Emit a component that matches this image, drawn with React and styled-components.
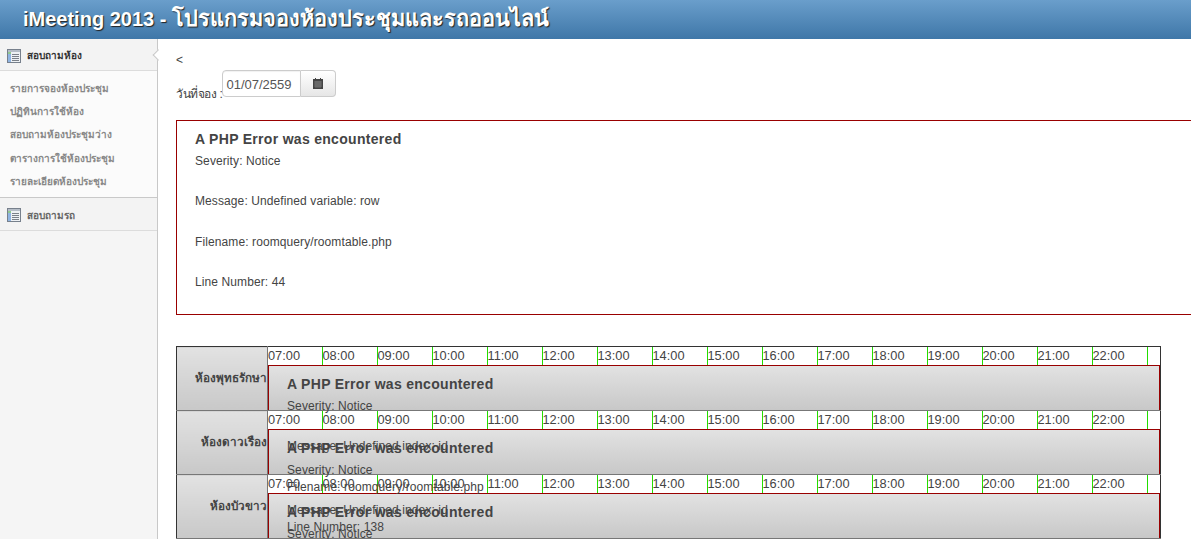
import React from 'react';
import styled, { createGlobalStyle } from 'styled-components';

const HOURS = ['07:00','08:00','09:00','10:00','11:00','12:00','13:00','14:00','15:00','16:00','17:00','18:00','19:00','20:00','21:00','22:00'];
const ROOMS = ['ห้องพุทธรักษา', 'ห้องดาวเรือง', 'ห้องบัวขาว'];
const MENU = ['รายการจองห้องประชุม', 'ปฏิทินการใช้ห้อง', 'สอบถามห้องประชุมว่าง', 'ตารางการใช้ห้องประชุม', 'รายละเอียดห้องประชุม'];

const GlobalStyle = createGlobalStyle`
  html, body {
    margin: 0;
    padding: 0;
    height: 539px;
    overflow: hidden;
    background: #fff;
    font-family: "Liberation Sans", Arial, Tahoma, "Noto Sans", sans-serif;
    font-size: 12px;
    color: #444;
  }
`;

const Header = styled.header`
  height: 39px;
  background: linear-gradient(to bottom, #6a9ecb, #3f77a8);
  color: #fff;
  font-size: 20px;
  font-weight: bold;
  line-height: 37px;
  padding-left: 23px;
  text-shadow: 1px 1px 1px #222;
  white-space: nowrap;
`;

const HeaderThai = styled.span`
  font-size: 21.7px;
`;

const Layout = styled.div`
  display: flex;
  width: 1191px;
  height: 500px;
`;

const Sidebar = styled.aside`
  position: relative;
  flex: 0 0 157px;
  background: #f5f5f5;
  border-right: 1px solid #c8c8c8;
`;

const SideHead = styled.div`
  display: flex;
  align-items: center;
  gap: 6px;
  box-sizing: border-box;
  height: ${p => p.$h}px;
  padding: 2px 0 0 7px;
  background: #f3f3f3;
  border-top: ${p => (p.$top ? '1px solid #c9c9c9' : '0')};
  border-bottom: 1px solid #dcdcdc;
  font-size: 10px;
  font-weight: bold;
  color: ${p => (p.$active ? '#333' : '#666')};
`;

const SideMenu = styled.ul`
  list-style: none;
  margin: 0;
  padding: 6px 0 4px 10px;
  height: 116px;
  background: #fbfbfb;
`;

const SideItem = styled.li`
  height: 23.2px;
  line-height: 23px;
  font-size: 10px;
  font-weight: bold;
  color: #888;
  white-space: nowrap;
`;

const Notch = styled.span`
  position: absolute;
  top: 12px;
  right: -1px;
  width: 7px;
  height: 7px;
  background: #fff;
  border-left: 1px solid #c8c8c8;
  border-bottom: 1px solid #c8c8c8;
  transform: rotate(45deg) translate(3px, -3px);
`;

const Main = styled.main`
  flex: 1;
  min-width: 0;
  padding: 15px 0 0 18px;
`;

const Back = styled.div`
  height: 16px;
  line-height: 13px;
  font-size: 12px;
  color: #444;
`;

const DateRow = styled.div`
  display: flex;
  align-items: flex-end;
  height: 27px;
`;

const DateLabel = styled.span`
  flex: 0 0 46px;
  font-size: 12px;
  line-height: 16px;
  margin-bottom: -5px;
  letter-spacing: -0.4px;
  white-space: nowrap;
`;

const DateInput = styled.div`
  box-sizing: border-box;
  width: 79px;
  height: 27px;
  padding-left: 3px;
  line-height: 27px;
  border: 1px solid #ccc;
  border-radius: 4px 0 0 4px;
  box-shadow: inset 0 1px 1px rgba(0,0,0,.06);
  font-size: 13px;
  color: #555;
`;

const DateButton = styled.div`
  box-sizing: border-box;
  display: flex;
  align-items: center;
  justify-content: center;
  width: 35px;
  height: 27px;
  background: linear-gradient(to bottom, #fff, #e6e6e6);
  border: 1px solid #ccc;
  border-left: 0;
  border-radius: 0 4px 4px 0;
`;

const ErrorBox = styled.div`
  box-sizing: border-box;
  width: 1100px;
  height: 195px;
  margin-top: 23px;
  padding: 0 0 0 18px;
  border: 1px solid #990000;
`;

const ErrorTitle = styled.h4`
  margin: 0;
  padding: 10px 0 3px;
  font-size: 14px;
  line-height: 17px;
  font-weight: bold;
  color: #444;
  letter-spacing: 0.3px;
`;

const ErrorLine = styled.p`
  margin: 0 0 ${p => (p.$last ? 0 : 20.33)}px;
  font-size: 12px;
  line-height: 20px;
  color: #444;
  letter-spacing: 0.1px;
`;

const RoomTable = styled.table`
  table-layout: fixed;
  border-collapse: collapse;
  width: 985px;
  margin-top: 31px;
  background: #fff;
`;

const RoomHead = styled.td`
  width: 91px;
  height: 64px;
  padding: 0 0 2px 0;
  box-sizing: border-box;
  background: linear-gradient(to bottom, #e2e2e2, #c8c8c8);
  border: 1px solid #777;
  border-top-color: ${p => (p.$first ? '#333' : '#777')};
  border-left-color: #333;
  font-size: 11.7px;
  font-weight: bold;
  text-align: right;
  color: #444;
  white-space: nowrap;
`;

const RoomBody = styled.td`
  height: 64px;
  padding: 0;
  box-sizing: border-box;
  vertical-align: top;
  border: 1px solid #777;
  border-top-color: ${p => (p.$first ? '#333' : '#777')};
  border-right-color: #333;
`;

const Slot = styled.div`
  height: 63px;
`;

const HourTable = styled.table`
  table-layout: fixed;
  border-collapse: collapse;
  width: 892px;
  height: 18px;
`;

const HourCell = styled.td`
  width: ${p => (p.$rest ? 13 : p.$first ? 54 : 55)}px;
  height: 18px;
  padding: 0;
  box-sizing: border-box;
  border-left: ${p => (p.$first ? 0 : '1px solid #22dd00')};
  font-size: 12.8px;
  line-height: 18px;
  color: #444;
  white-space: nowrap;
`;

const SlotError = styled.div`
  box-sizing: border-box;
  height: 45px;
  padding-left: 18px;
  background: linear-gradient(to bottom, #e2e2e2, #c8c8c8);
  border: 1px solid #990000;
  border-width: 1px 1px 0 1px;
`;

function CalendarIcon() {
  return (
    <svg width="10" height="11" viewBox="0 0 10 11">
      <path d="M0 1h2V0h1v1h4V0h1v1h2v10H0z" fill="#444" />
      <path d="M1 4h8M1 6h8M1 8h8M3 3v7M5 3v7M7 3v7" stroke="#999" strokeWidth=".5" />
    </svg>
  );
}

function ListIcon() {
  return (
    <svg width="14" height="14" viewBox="0 0 14 14">
      <rect x=".5" y=".5" width="13" height="13" fill="#eef1f4" stroke="#77808c" />
      <rect x="1" y="1" width="12" height="2" fill="#b5bdc7" />
      <rect x="1" y="3" width="3" height="10" fill="#8fb4e2" />
      <rect x="1" y="3" width="3" height="2" fill="#8fc98f" />
      <path d="M5 5.5h7M5 7.5h7M5 9.5h7M5 11.5h7" stroke="#7a8088" />
    </svg>
  );
}

function PhpError({ message, filename, line }) {
  return (
    <>
      <ErrorTitle>A PHP Error was encountered</ErrorTitle>
      <ErrorLine>Severity: Notice</ErrorLine>
      <ErrorLine>Message: {message}</ErrorLine>
      <ErrorLine>Filename: {filename}</ErrorLine>
      <ErrorLine $last>Line Number: {line}</ErrorLine>
    </>
  );
}

export default function App() {
  return (
    <>
      <GlobalStyle />
      <Header>iMeeting 2013 - <HeaderThai>โปรแกรมจองห้องประชุมและรถออนไลน์</HeaderThai></Header>
      <Layout>
        <Sidebar>
          <SideHead $h={32} $active><ListIcon />สอบถามห้อง</SideHead>
          <Notch />
          <SideMenu>
            {MENU.map(m => <SideItem key={m}>{m}</SideItem>)}
          </SideMenu>
          <SideHead $h={34} $top><ListIcon />สอบถามรถ</SideHead>
        </Sidebar>
        <Main>
          <Back>&lt;</Back>
          <DateRow>
            <DateLabel>วันที่จอง :</DateLabel>
            <DateInput>01/07/2559</DateInput>
            <DateButton><CalendarIcon /></DateButton>
          </DateRow>
          <ErrorBox>
            <PhpError message="Undefined variable: row" filename="roomquery/roomtable.php" line="44" />
          </ErrorBox>
          <RoomTable>
            <tbody>
              {ROOMS.map((room, i) => (
                <tr key={room}>
                  <RoomHead $first={i === 0}>{room}</RoomHead>
                  <RoomBody $first={i === 0}>
                    <Slot>
                      <HourTable>
                        <tbody>
                          <tr>
                            {HOURS.map((h, j) => <HourCell key={h} $first={j === 0}>{h}</HourCell>)}
                            <HourCell $rest />
                          </tr>
                        </tbody>
                      </HourTable>
                      <SlotError>
                        <PhpError message="Undefined index: id" filename="roomquery/roomtable.php" line="138" />
                      </SlotError>
                    </Slot>
                  </RoomBody>
                </tr>
              ))}
            </tbody>
          </RoomTable>
        </Main>
      </Layout>
    </>
  );
}
